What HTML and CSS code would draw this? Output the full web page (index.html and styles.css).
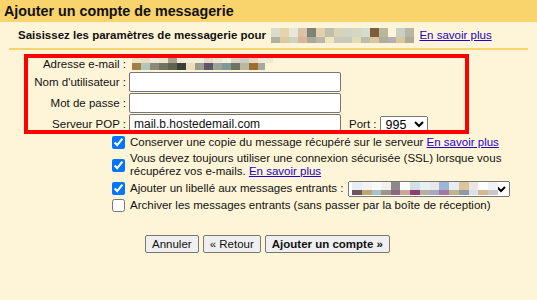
FILE: index.html
```html
<!DOCTYPE html>
<html lang="fr">
<head>
  <meta charset="UTF-8">
  <title>Ajouter un compte de messagerie</title>
  <link rel="stylesheet" href="styles.css">
</head>
<body>
  <div class="titlebar">Ajouter un compte de messagerie</div>

  <div class="content">
    <div class="intro">
      <b>Saisissez les paramètres de messagerie pour</b>
      <span class="mosaic mosaic-intro"></span>
      <a href="#">En savoir plus</a>
    </div>

    <div class="fields">
      <div class="highlight"></div>

      <label class="field-label">Adresse e-mail :</label>
      <div class="field-value"><span class="mosaic mosaic-address"></span></div>

      <label class="field-label" for="username">Nom d'utilisateur :</label>
      <div class="field-value"><input type="text" id="username"></div>

      <label class="field-label" for="password">Mot de passe :</label>
      <div class="field-value"><input type="password" id="password"></div>

      <label class="field-label" for="server">Serveur POP :</label>
      <div class="field-value">
        <input type="text" id="server" value="mail.b.hostedemail.com">
        <label class="port-label" for="port">Port :</label>
        <select id="port" class="port-select">
          <option>995</option>
          <option>110</option>
        </select>
      </div>
    </div>

    <div class="options">
      <div class="check"><input type="checkbox" checked></div>
      <div class="option-text">Conserver une copie du message récupéré sur le serveur <a href="#">En savoir plus</a></div>

      <div class="check"><input type="checkbox" checked></div>
      <div class="option-text">Vous devez toujours utiliser une connexion sécurisée (SSL) lorsque vous récupérez vos e-mails. <a href="#">En savoir plus</a></div>

      <div class="check"><input type="checkbox" checked></div>
      <div class="option-text option-inline">
        Ajouter un libellé aux messages entrants :
        <span class="label-select-wrap">
          <select class="label-select"><option></option></select>
          <span class="mosaic mosaic-label"></span>
        </span>
      </div>

      <div class="check"><input type="checkbox"></div>
      <div class="option-text">Archiver les messages entrants (sans passer par la boîte de réception)</div>
    </div>

    <div class="buttons">
      <button>Annuler</button>
      <button>« Retour</button>
      <button class="primary">Ajouter un compte »</button>
    </div>
  </div>
</body>
</html>
```

FILE: styles.css
```css
body {
  margin: 0;
  font-family: "Liberation Sans", Arial, sans-serif;
  font-size: 11.5px;
  color: #111;
  background-color: #fef5d8;
}
a {
  color: #2200cc;
}
.titlebar {
  height: 22px;
  line-height: 22px;
  padding-left: 4px;
  background-color: #f9d36b;
  font-size: 14.3px;
  font-weight: bold;
  color: #111;
}
.content {
  padding: 0 9px;
}
.intro {
  height: 26px;
  line-height: 26px;
  padding-left: 9px;
  white-space: nowrap;
  border-bottom: 2px solid #f9d36b;
}
.intro .mosaic-intro {
  vertical-align: middle;
  margin: 0 2px;
}

/* blurred-out addresses */
.mosaic {
  display: inline-block;
  background-repeat: no-repeat;
}
.mosaic-intro {
  width: 143px;
  height: 15px;
  background-image:
    linear-gradient(to right, #d9dccb 0 9px, #e6d3ac 9px 18px, #e8e8d8 18px 27px, #dcc2a8 27px 36px, #7b8373 36px 45px, #e3cfae 45px 54px, #bfbfa9 54px 63px, #d9d3b5 63px 72px, #d3d3c6 72px 81px, #d4d7c2 81px 90px, #d4dccf 90px 99px, #7c5f3a 99px 108px, #b9b89c 108px 117px, #fef5d8 117px 125px, #c9cfc2 125px 134px, #b5b8a6 134px 143px),
    linear-gradient(to right, #b0b0a5 0 9px, #dcc9a0 9px 18px, #cdd3c3 18px 27px, #dbb49c 27px 36px, #aba99a 36px 45px, #bab8a4 45px 54px, #f2e4c0 54px 63px, #c8c8bd 63px 72px, #c8c8bb 72px 81px, #e3dbb4 81px 90px, #bdbca6 90px 99px, #d6c79e 99px 108px, #b1ad99 108px 117px, #b4b0b6 117px 125px, #dac89a 125px 134px, #aeaa94 134px 143px);
  background-size: 143px 9px, 143px 6px;
  background-position: 0 0, 0 9px;
}
.mosaic-address {
  width: 141px;
  height: 13px;
  margin-left: 3px;
  background-image:
    linear-gradient(to right, #efe4c8 0 9px, #e9dcc0 9px 18px, #f0ead6 18px 27px, #ece3c8 27px 36px, #a8a08e 36px 45px, #efe8d4 45px 54px, #f2ecd8 54px 63px, #f3eed9 63px 72px, #e4dcc6 72px 81px, #ece7d6 81px 90px, #f5efdc 90px 99px, #dbd5c4 99px 108px, #c9cfc4 108px 117px, #e6d8b8 117px 126px, #f0e8d2 126px 141px),
    linear-gradient(to right, #a47f45 0 9px, #b3c4b8 9px 18px, #8a8a78 18px 27px, #6f7462 27px 36px, #5c6250 36px 45px, #3b3f38 45px 54px, #e8e0b8 54px 63px, #9b9b8e 63px 72px, #5c5666 72px 81px, #9aa39a 81px 90px, #7f9a9a 90px 99px, #6f7462 99px 108px, #b8b8a0 108px 117px, #a06a30 117px 126px, #a8a89a 126px 133px, #fef5d8 133px 141px);
  background-size: 141px 6px, 141px 7px;
  background-position: 0 0, 0 6px;
}
.mosaic-label {
  position: absolute;
  left: 4px;
  top: 1px;
  width: 146px;
  height: 13px;
  background-image:
    linear-gradient(to right, #e9eef3 0 10px, #f3f3f3 10px 20px, #fafafa 20px 29px, #f4f0ec 29px 39px, #8a8a8a 39px 48px, #ffffff 48px 58px, #cfe1e1 58px 68px, #e6f0f5 68px 78px, #e8e8e8 78px 87px, #9db5d6 87px 97px, #e8edf5 97px 107px, #dcc59a 107px 117px, #eee5e2 117px 126px, #ffffff 126px 136px, #f0f3f8 136px 146px),
    linear-gradient(to right, #6a5560 0 10px, #bfa46c 10px 20px, #a6c2cc 20px 29px, #9a978a 29px 39px, #8f6680 39px 48px, #c7a79a 48px 58px, #8f3f6e 58px 68px, #b5b0a0 68px 78px, #a8a8c0 78px 87px, #a07aa0 87px 97px, #c0b48a 97px 107px, #909aa0 107px 117px, #d8e2e8 117px 126px, #d8b890 126px 136px, #c8c8c8 136px 146px);
  background-size: 146px 8px, 146px 5px;
  background-position: 0 0, 0 8px;
}

/* account fields */
.fields {
  position: relative;
  display: grid;
  grid-template-columns: 117px auto;
  column-gap: 3px;
  row-gap: 1px;
  align-items: center;
  margin-top: 6px;
}
.highlight {
  position: absolute;
  left: 15px;
  top: -2px;
  width: 445px;
  height: 80px;
  box-sizing: border-box;
  border: 4px solid #ff0000;
  z-index: 1;
  pointer-events: none;
}
.field-label {
  text-align: right;
  white-space: nowrap;
}
.field-value {
  display: flex;
  align-items: center;
  min-height: 15px;
}
.field-value input {
  box-sizing: border-box;
  width: 212px;
  height: 20px;
  margin: 0;
  padding: 1px 4px;
  border: 1px solid #767676;
  border-radius: 2px;
  font-family: inherit;
  font-size: 12px;
  color: #111;
}
.port-label {
  margin-left: 8px;
  margin-right: 4px;
}
.port-select {
  box-sizing: border-box;
  width: 48px;
  height: 17px;
  margin: 0;
  padding: 0;
  font-family: inherit;
  font-size: 12.5px;
}

/* options */
.options {
  display: grid;
  grid-template-columns: 117px 378px;
  column-gap: 3px;
  margin-top: 1px;
}
.check {
  justify-self: end;
  align-self: center;
  display: flex;
}
.check input {
  width: 13px;
  height: 13px;
  margin: 0 1px 0 0;
}
.option-text {
  padding: 1px 0 1px 1px;
  line-height: 13.5px;
}
.option-inline {
  display: flex;
  align-items: center;
  white-space: nowrap;
}
.label-select-wrap {
  position: relative;
  display: inline-block;
  margin-left: 4px;
}
.label-select {
  display: block;
  box-sizing: border-box;
  width: 162px;
  height: 16px;
  margin: 0;
  padding: 0;
  font-size: 11px;
}

.buttons {
  display: flex;
  gap: 4px;
  margin: 22px 0 0 136px;
}
button {
  height: 18px;
  padding: 0 6px;
  border: 1px solid #767676;
  border-radius: 2px;
  background-color: #efefef;
  font-family: inherit;
  font-size: 11.5px;
  color: #111;
}
button.primary {
  font-weight: bold;
}
```
